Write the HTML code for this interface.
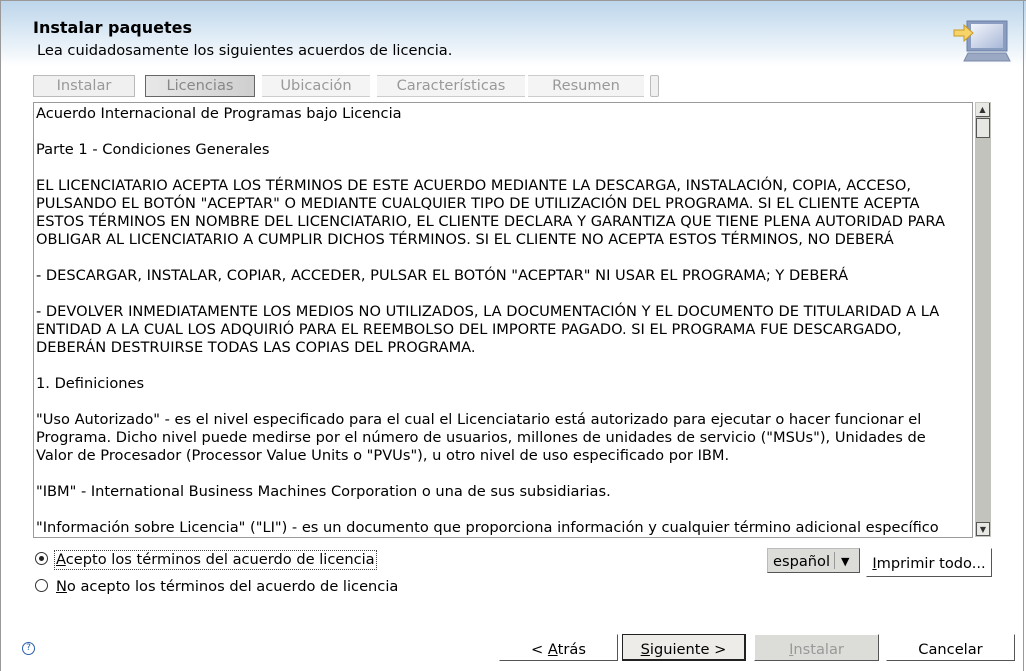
<!DOCTYPE html>
<html><head><meta charset="utf-8"><style>
body{margin:0;width:1026px;height:671px;overflow:hidden;background:#fff;font-family:"DejaVu Sans","Liberation Sans",sans-serif;font-size:14.6px;color:#000;position:relative}
.abs{position:absolute}
.hdr{left:0;top:0;width:1026px;height:66px;background:linear-gradient(180deg,#bcd4ea 0%,#d9e8f4 45%,#f4f8fc 85%,#fff 100%)}
.crumb{top:75px;height:20px;border:1px solid #bbb;background:#f0f0f0;color:#999;font-size:14.6px;line-height:20px;text-align:center}
.txt{left:33px;top:102px;width:938px;height:434px;border:1px solid #9a9a9a;overflow:hidden}
.txt div{position:absolute;left:2px;white-space:nowrap;line-height:18px;margin-top:1px}
.btn{height:27px;line-height:29px;text-align:center;font-size:14.6px;border:1px solid #fff;border-right:1px solid #555;border-bottom:1px solid #555;box-sizing:border-box;background:#fff}
u{text-decoration:underline}
</style></head><body>
<div class="abs hdr"></div>
<div class="abs" style="left:0;top:0;width:1026px;height:1px;background:#999"></div>
<div class="abs" style="left:0;top:0;width:1px;height:671px;background:#999"></div>
<div class="abs" style="left:1023px;top:0;width:1px;height:671px;background:#999"></div>
<div class="abs" style="left:33px;top:18px;font-size:16px;font-weight:bold">Instalar paquetes</div>
<div class="abs" style="left:37px;top:42px">Lea cuidadosamente los siguientes acuerdos de licencia.</div>
<svg class="abs" style="left:950px;top:18px" width="62" height="46" viewBox="0 0 62 46">
<defs><linearGradient id="g" x1="0" y1="0" x2="1" y2="1"><stop offset="0" stop-color="#f2f5fb"/><stop offset="1" stop-color="#a9b8d8"/></linearGradient></defs>
<rect x="17" y="3" width="40" height="30" fill="#8a9cc0" stroke="#6b7ea6"/>
<rect x="21" y="6" width="32" height="24" fill="url(#g)"/>
<polygon points="18,35 56,35 60,43 14,43" fill="#9aa8c4" stroke="#7a89aa"/>
<polygon points="4,12 14,12 14,7 23,15 14,23 14,18 4,18" fill="#f7d46a" stroke="#c99a20"/>
</svg>
<div class="abs crumb" style="left:33px;width:100px">Instalar</div>
<div class="abs crumb" style="left:145px;width:108px;background:linear-gradient(90deg,#e8e8e8,#cfcfcf);border-color:#666;color:#888">Licencias</div>
<div class="abs crumb" style="left:262px;width:108px;border:0;background:#f4f4f4;border-top:1px solid #ccc;border-bottom:1px solid #ccc">Ubicación</div>
<div class="abs crumb" style="left:377px;width:148px;border:0;background:#f4f4f4;border-top:1px solid #ccc;border-bottom:1px solid #ccc">Características</div>
<div class="abs crumb" style="left:528px;width:116px;border:0;background:#f4f4f4;border-top:1px solid #ccc;border-bottom:1px solid #ccc">Resumen</div>
<div class="abs crumb" style="left:650px;width:7px;border-radius:2px"></div>
<div class="abs txt">
<div style="top:1px">Acuerdo Internacional de Programas bajo Licencia</div>
<div style="top:37px">Parte 1 - Condiciones Generales</div>
<div style="top:73px">EL LICENCIATARIO ACEPTA LOS TÉRMINOS DE ESTE ACUERDO MEDIANTE LA DESCARGA, INSTALACIÓN, COPIA, ACCESO,</div>
<div style="top:91px">PULSANDO EL BOTÓN "ACEPTAR" O MEDIANTE CUALQUIER TIPO DE UTILIZACIÓN DEL PROGRAMA. SI EL CLIENTE ACEPTA</div>
<div style="top:109px">ESTOS TÉRMINOS EN NOMBRE DEL LICENCIATARIO, EL CLIENTE DECLARA Y GARANTIZA QUE TIENE PLENA AUTORIDAD PARA</div>
<div style="top:127px">OBLIGAR AL LICENCIATARIO A CUMPLIR DICHOS TÉRMINOS. SI EL CLIENTE NO ACEPTA ESTOS TÉRMINOS, NO DEBERÁ</div>
<div style="top:163px">- DESCARGAR, INSTALAR, COPIAR, ACCEDER, PULSAR EL BOTÓN "ACEPTAR" NI USAR EL PROGRAMA; Y DEBERÁ</div>
<div style="top:199px">- DEVOLVER INMEDIATAMENTE LOS MEDIOS NO UTILIZADOS, LA DOCUMENTACIÓN Y EL DOCUMENTO DE TITULARIDAD A LA</div>
<div style="top:217px">ENTIDAD A LA CUAL LOS ADQUIRIÓ PARA EL REEMBOLSO DEL IMPORTE PAGADO. SI EL PROGRAMA FUE DESCARGADO,</div>
<div style="top:235px">DEBERÁN DESTRUIRSE TODAS LAS COPIAS DEL PROGRAMA.</div>
<div style="top:271px">1. Definiciones</div>
<div style="top:307px">"Uso Autorizado" - es el nivel especificado para el cual el Licenciatario está autorizado para ejecutar o hacer funcionar el</div>
<div style="top:325px">Programa. Dicho nivel puede medirse por el número de usuarios, millones de unidades de servicio ("MSUs"), Unidades de</div>
<div style="top:343px">Valor de Procesador (Processor Value Units o "PVUs"), u otro nivel de uso especificado por IBM.</div>
<div style="top:379px">"IBM" - International Business Machines Corporation o una de sus subsidiarias.</div>
<div style="top:415px">"Información sobre Licencia" ("LI") - es un documento que proporciona información y cualquier término adicional específico</div>
</div>
<div class="abs" style="left:975px;top:102px;width:16px;height:435px;background:#c3c3bd"></div>
<div class="abs" style="left:976px;top:103px;width:14px;height:14px;background:#e8e8e4;border-right:1px solid #555;border-bottom:1px solid #555;box-sizing:border-box;font-size:8px;text-align:center;line-height:13px;color:#333">▲</div>
<div class="abs" style="left:976px;top:118px;width:14px;height:20px;background:#e6e6e2;border:1px solid #555;box-sizing:border-box"></div>
<div class="abs" style="left:976px;top:522px;width:14px;height:14px;background:#e8e8e4;border:1px solid #555;box-sizing:border-box;font-size:8px;text-align:center;line-height:13px;color:#333">▼</div>
<div class="abs" style="left:35px;top:552px;width:11px;height:11px;border:1px solid #333;border-radius:50%"></div>
<div class="abs" style="left:39px;top:556px;width:5px;height:5px;background:#222;border-radius:50%"></div>
<div class="abs" style="left:54px;top:550px;border:1px dotted #444;padding:0 1px;line-height:18px"><u>A</u>cepto los términos del acuerdo de licencia</div>
<div class="abs" style="left:35px;top:579px;width:11px;height:11px;border:1px solid #333;border-radius:50%"></div>
<div class="abs" style="left:56px;top:578px;line-height:18px"><u>N</u>o acepto los términos del acuerdo de licencia</div>
<div class="abs" style="left:767px;top:548px;width:93px;height:25px;background:#dcdcd8;border:1px solid #bbb;border-right-color:#555;border-bottom-color:#555;box-sizing:border-box;line-height:25px;padding-left:5px">español <span style="position:absolute;left:66px;top:3px;height:17px;border-left:1px solid #999"></span><span style="position:absolute;left:73px;font-size:11px">▼</span></div>
<div class="abs btn" style="left:866px;top:548px;width:126px;height:29px;line-height:30px"><u>I</u>mprimir todo...</div>
<div class="abs" style="left:22px;top:642px;width:11px;height:11px;border:1px solid #2a5fb0;border-radius:50%;font-size:9px;line-height:11px;text-align:center;color:#2a5fb0">?</div>
<div class="abs btn" style="left:499px;top:634px;width:119px">&lt; <u>A</u>trás</div>
<div class="abs btn" style="left:622px;top:634px;width:124px;border:1px solid #222;border-right:2px solid #222;border-bottom:2px solid #222;background:#eeece8"><u>S</u>iguiente &gt;</div>
<div class="abs btn" style="left:754px;top:634px;width:125px;background:#dcdcd8;color:#999"><u>I</u>nstalar</div>
<div class="abs btn" style="left:886px;top:634px;width:129px">Cancelar</div>
</body></html>
